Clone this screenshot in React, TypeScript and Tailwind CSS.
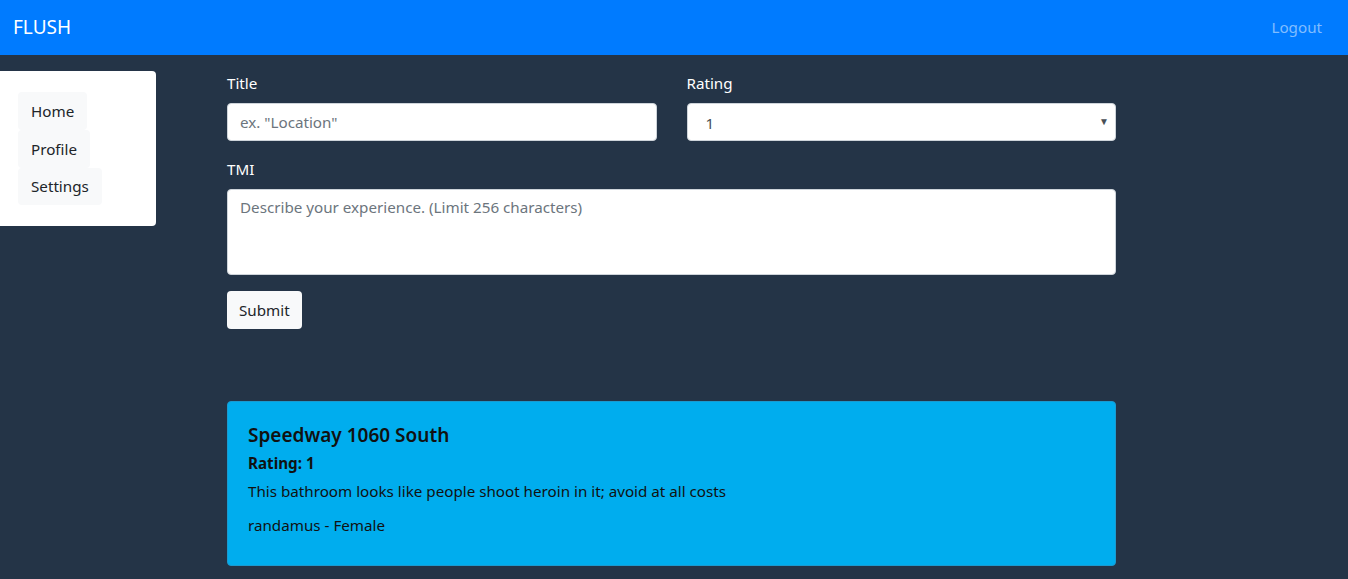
export default function App() {
  return (
    <div className="min-h-[579px] bg-[#243447] font-['Noto_Sans',sans-serif] text-[15.2px]">
      <nav className="flex h-[55px] items-center justify-between bg-[#007bff] pl-[13px] pr-[26px]">
        <span className="text-[19px] text-white">FLUSH</span>
        <span className="text-[#80bdff]">Logout</span>
      </nav>

      <div className="flex">
        <aside className="mt-4 h-[155px] w-[156px] shrink-0 rounded-r bg-white pl-[18px] pt-[21px]">
          <div className="flex flex-col items-start">
            <button className="h-[38px] rounded bg-[#f8f9fa] px-[13px] text-[#212529]">Home</button>
            <button className="h-[38px] rounded bg-[#f8f9fa] px-[13px] text-[#212529]">Profile</button>
            <button className="h-[37px] rounded bg-[#f8f9fa] px-[13px] text-[#212529]">Settings</button>
          </div>
        </aside>

        <main className="ml-[71px] w-[889px] pt-[16px]">
          <div className="grid grid-cols-2 gap-[30px]">
            <div>
              <label className="block leading-6 text-white">Title</label>
              <input
                placeholder='ex. "Location"'
                className="mt-2 h-[38px] w-full rounded border border-[#ced4da] bg-white px-3 text-[#495057] placeholder:text-[#6c757d]"
              />
            </div>
            <div>
              <label className="block leading-6 text-white">Rating</label>
              <div className="relative mt-2 h-[38px] w-full rounded border border-[#ced4da] bg-white">
                <span className="absolute left-[18px] top-[8px] text-[#495057]">1</span>
                <span className="absolute right-[6px] top-[10px] text-[10px] text-[#495057]">▼</span>
              </div>
            </div>
          </div>

          <div className="mt-[16px]">
            <label className="block leading-6 text-white">TMI</label>
            <textarea
              placeholder="Describe your experience. (Limit 256 characters)"
              className="mt-2 block h-[86px] w-full resize-none rounded border border-[#ced4da] bg-white px-3 py-[6px] text-[#495057] placeholder:text-[#6c757d]"
            />
          </div>

          <button className="mt-4 h-[38px] rounded bg-[#f8f9fa] px-3 text-[#212529]">Submit</button>

          <div className="mt-[72px] h-[165px] rounded border border-[#1a9ad0] bg-[#00adee] px-5 pt-[21px] text-[#111]">
            <h3 className="text-[19px] font-semibold leading-6">Speedway 1060 South</h3>
            <p className="mt-[4px] font-bold leading-6">Rating: 1</p>
            <p className="mt-[4px] leading-6">This bathroom looks like people shoot heroin in it; avoid at all costs</p>
            <p className="mt-[10px] leading-6">randamus - Female</p>
          </div>
        </main>
      </div>
    </div>
  );
}
